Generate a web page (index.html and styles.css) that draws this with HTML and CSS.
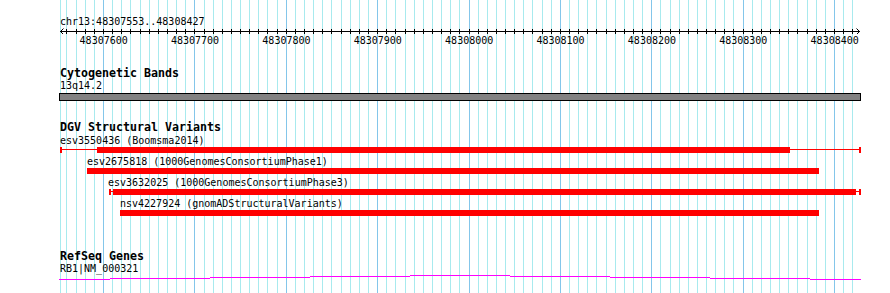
FILE: index.html
```html
<!DOCTYPE html>
<html>
<head>
  <title>chr13:48307553..48308427</title>
  <link rel="stylesheet" href="styles.css">
</head>
<body>
  <div class="browser">
    <svg class="grid" id="grid" width="890" height="293"></svg>

    <div class="ruler">
      <div class="ruler-label">chr13:48307553..48308427</div>
      <svg class="axis" id="axis" width="802" height="6"></svg>
      <div class="ruler-ticks">
        <span>48307600</span>
        <span>48307700</span>
        <span>48307800</span>
        <span>48307900</span>
        <span>48308000</span>
        <span>48308100</span>
        <span>48308200</span>
        <span>48308300</span>
        <span>48308400</span>
      </div>
    </div>

    <div class="track track-bands">
      <h3 class="track-title">Cytogenetic Bands</h3>
      <div class="feature-label">13q14.2</div>
      <div class="band"></div>
    </div>

    <div class="track track-dgv">
      <h3 class="track-title">DGV Structural Variants</h3>

      <div class="variant">
        <div class="feature-label">esv3550436 (Boomsma2014)</div>
        <svg class="bar" width="802" height="6">
          <rect x="1" y="2" width="801" height="1"></rect>
          <rect x="1" y="0" width="2" height="6"></rect>
          <rect x="38" y="0" width="693" height="6"></rect>
          <rect x="800" y="0" width="2" height="6"></rect>
        </svg>
      </div>

      <div class="variant">
        <div class="feature-label indent-1">esv2675818 (1000GenomesConsortiumPhase1)</div>
        <svg class="bar" width="802" height="6">
          <rect x="28" y="0" width="732" height="6"></rect>
        </svg>
      </div>

      <div class="variant">
        <div class="feature-label indent-2">esv3632025 (1000GenomesConsortiumPhase3)</div>
        <svg class="bar" width="802" height="6">
          <rect x="50" y="2" width="752" height="1"></rect>
          <rect x="50" y="0" width="2" height="6"></rect>
          <rect x="54" y="0" width="743" height="6"></rect>
          <rect x="800" y="0" width="2" height="6"></rect>
        </svg>
      </div>

      <div class="variant">
        <div class="feature-label indent-3">nsv4227924 (gnomADStructuralVariants)</div>
        <svg class="bar" width="802" height="6">
          <rect x="61" y="0" width="699" height="6"></rect>
        </svg>
      </div>
    </div>

    <div class="track track-genes">
      <h3 class="track-title">RefSeq Genes</h3>
      <div class="feature-label gene-label">RB1|NM_000321</div>
      <svg class="gene" width="802" height="6">
        <rect x="0" y="4" width="51" height="1"></rect>
        <rect x="51" y="3" width="100" height="1"></rect>
        <rect x="151" y="2" width="100" height="1"></rect>
        <rect x="251" y="1" width="100" height="1"></rect>
        <rect x="351" y="0" width="100" height="1"></rect>
        <rect x="451" y="1" width="100" height="1"></rect>
        <rect x="551" y="2" width="100" height="1"></rect>
        <rect x="651" y="3" width="100" height="1"></rect>
        <rect x="751" y="4" width="51" height="1"></rect>
      </svg>
    </div>
  </div>

  <script>
    document.addEventListener('DOMContentLoaded', function() {
      const NS = 'http://www.w3.org/2000/svg';
      const END = 48308427;
      // x of 48307600 and pixels per base, read off the ruler
      const ORIGIN = 103;
      const SCALE = 0.91375;
      const LEFT = 59; // page x of the track svgs

      function xOf(bp) {
        return Math.round(ORIGIN + (bp - 48307600) * SCALE);
      }

      function addRect(svg, x, y, w, h, cls) {
        const r = document.createElementNS(NS, 'rect');
        r.setAttribute('x', x);
        r.setAttribute('y', y);
        r.setAttribute('width', w);
        r.setAttribute('height', h);
        if (cls) r.setAttribute('class', cls);
        svg.appendChild(r);
      }

      // background grid, one line every 10 bp, darker every 100 bp
      const grid = document.getElementById('grid');
      addRect(grid, 60, 0, 1, 293, 'minor');
      for (let bp = 48307560; bp < END; bp += 10) {
        addRect(grid, xOf(bp), 0, 1, 293, bp % 100 === 0 ? 'major' : 'minor');
      }

      // ruler: axis, ticks and arrow heads
      const axis = document.getElementById('axis');
      addRect(axis, 1, 3, 800, 1);
      for (let bp = 48307560; bp < END; bp += 10) {
        addRect(axis, xOf(bp) - LEFT, 1, 1, 5);
      }
      const arrows = document.createElementNS(NS, 'path');
      arrows.setAttribute('d', 'M4.5 0.5 L1.5 3.5 L4.5 6.5 M797.5 0.5 L800.5 3.5 L797.5 6.5');
      axis.appendChild(arrows);
    });
  </script>
</body>
</html>
```

FILE: styles.css
```css
body {
  margin: 0;
  background-color: #fff;
}
.browser {
  position: relative;
  z-index: 0;
  width: 890px;
  height: 293px;
  padding-top: 15px;
  box-sizing: border-box;
  overflow: hidden;
  font-family: "DejaVu Sans Mono", monospace;
  font-size: 10px;
  color: #000;
}
.grid {
  position: absolute;
  left: 0;
  top: 0;
  z-index: -1;
}
.grid .minor {
  fill: #a8eaee;
}
.grid .major {
  fill: #84c6ea;
}
.ruler-label {
  margin-left: 60px;
  line-height: 13px;
}
.axis {
  display: block;
  margin-left: 59px;
  fill: #000;
}
.axis path {
  fill: none;
  stroke: #000;
  stroke-width: 1;
}
.ruler-ticks {
  display: flex;
  margin-left: 58px;
  line-height: 13px;
}
.ruler-ticks span {
  flex: 0 0 91.375px;
  text-align: center;
}
.track-title {
  margin: 0 0 0 60px;
  font-size: 11.63px;
  font-weight: bold;
  line-height: 13px;
}
.feature-label {
  margin-left: 60px;
  line-height: 12px;
  white-space: nowrap;
}
.feature-label.indent-1 {
  margin-left: 87px;
}
.feature-label.indent-2 {
  margin-left: 108px;
}
.feature-label.indent-3 {
  margin-left: 120px;
}
.track-bands {
  margin-top: 20px;
}
.band {
  margin: 1px 0 0 59px;
  width: 802px;
  height: 8px;
  box-sizing: border-box;
  border: 1px solid #000;
  background-color: #828282;
}
.track-dgv {
  margin-top: 20px;
}
.variant {
  margin-bottom: 3px;
}
.variant:first-of-type {
  margin-top: 1px;
}
.bar {
  display: block;
  margin-left: 59px;
  fill: #f00;
}
.track-genes {
  margin-top: 34px;
}
.gene-label {
  line-height: 12px;
}
.gene {
  display: block;
  margin-left: 59px;
  fill: #f0f;
}
```
